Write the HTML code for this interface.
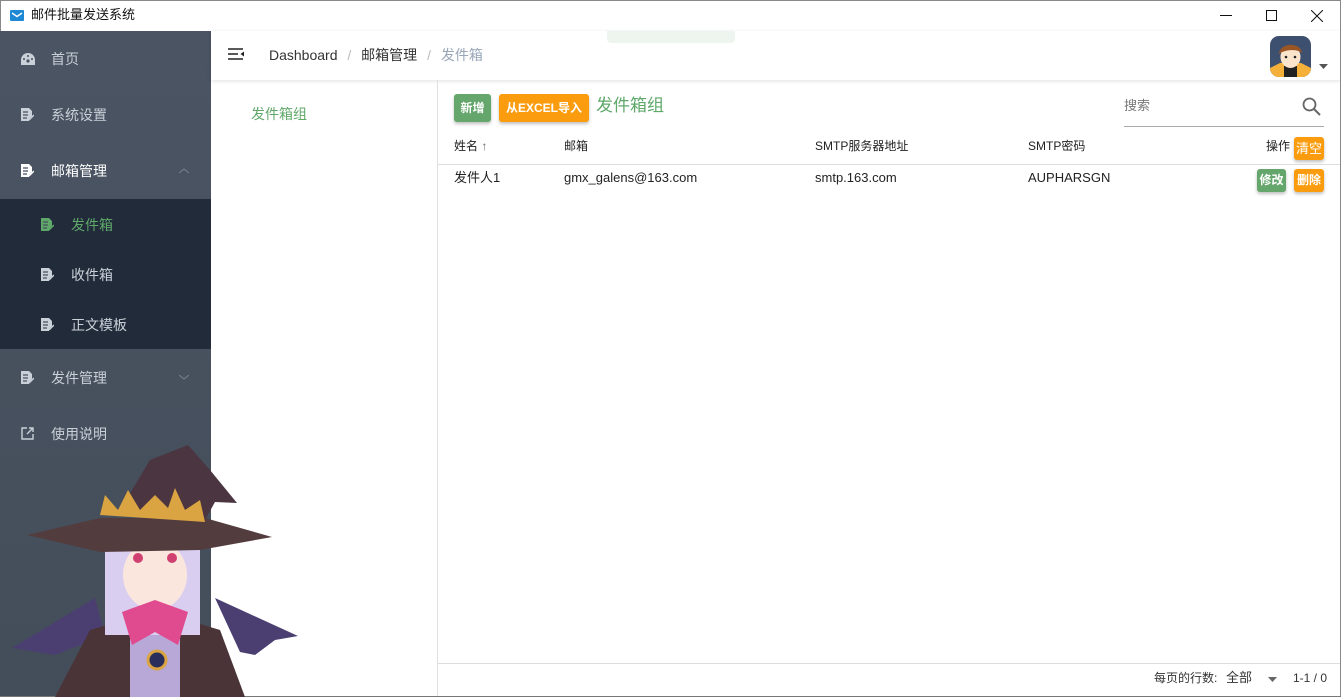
<!DOCTYPE html>
<html><head><meta charset="utf-8"><style>
*{margin:0;padding:0;box-sizing:border-box}
body{width:1341px;height:697px;overflow:hidden;font-family:"Liberation Sans","Noto Sans CJK SC",sans-serif;background:#fff;position:relative;font-size:13px;color:#222;line-height:1.15}
.abs{position:absolute}
#title{left:0;top:0;width:1341px;height:31px;background:#fff;border:1px solid #888;border-bottom:none}
#side{left:0;top:31px;width:211px;height:666px;background:linear-gradient(#4a5463,#444e5a)}
.mi{position:absolute;left:0;width:211px;height:56px;color:#c9d0d8;font-size:14px}
.mi span{position:absolute;left:51px;top:20px}
.ic{position:absolute;left:21px;top:21px;width:13px;height:13px}
#sub{left:0;top:199px;width:211px;height:150px;background:#212b3a}
.si{position:absolute;left:0;width:211px;height:50px;color:#c9d0d8;font-size:14px}
.si span{position:absolute;left:71px;top:18px}
.si .ic{left:41px;top:19px}
.btn{position:absolute;color:#fff;font-size:12px;border-radius:3px;box-shadow:0 2px 3px rgba(0,0,0,.25);text-align:center}
</style></head><body>
<div id="title" class="abs">
 <svg class="abs" style="left:9px;top:9px" width="14" height="11"><rect width="14" height="11" rx="1" fill="#1e88d4"/><path d="M2 3 L7 6.5 L12 3" stroke="#fff" stroke-width="1.4" fill="none"/></svg>
 <div class="abs" style="left:30px;top:7px;font-size:13px;color:#111">邮件批量发送系统</div>
 <div class="abs" style="left:1219px;top:14px;width:12px;height:1px;background:#111"></div>
 <div class="abs" style="left:1265px;top:9px;width:11px;height:11px;border:1px solid #111"></div>
 <svg class="abs" style="left:1310px;top:9px" width="12" height="12"><path d="M0 0L12 12M12 0L0 12" stroke="#111" stroke-width="1"/></svg>
</div>
<div id="side" class="abs"></div>
<svg class="abs" style="left:0;top:0" width="0" height="0"><defs>
<g id="doc"><path d="M0 0h8l3 3v5l-3 3v2H0z" fill="currentColor"/><path d="M2 4h5M2 7h5M2 10h4" stroke="#48525f" stroke-width="1.2"/><path d="M8 12l5-5" stroke="currentColor" stroke-width="1.5"/></g>
</defs></svg>
<div class="mi" style="top:31px"><svg class="ic" style="top:22px;width:14px;height:12px" viewBox="0 0 14 12"><path d="M7 0A7 7 0 0 0 0 7v5h14V7A7 7 0 0 0 7 0z" fill="#c9d0d8"/><circle cx="7" cy="8" r="1.6" fill="#48525f"/><circle cx="3" cy="6" r="1" fill="#48525f"/><circle cx="11" cy="6" r="1" fill="#48525f"/><circle cx="7" cy="3" r="1" fill="#48525f"/></svg><span>首页</span></div>
<div class="mi" style="top:87px;color:#c9d0d8"><svg class="ic" viewBox="0 0 13 13"><use href="#doc"/></svg><span>系统设置</span></div>
<div class="mi" style="top:143px;color:#fff"><svg class="ic" viewBox="0 0 13 13"><use href="#doc"/></svg><span>邮箱管理</span><svg class="abs" style="left:179px;top:25px" width="10" height="6"><path d="M0 5L5 1L10 5" stroke="#7a838f" fill="none"/></svg></div>
<div id="sub" class="abs">
 <div class="si" style="top:0;color:#5fa86a"><svg class="ic" viewBox="0 0 13 13"><use href="#doc"/></svg><span>发件箱</span></div>
 <div class="si" style="top:50px"><svg class="ic" viewBox="0 0 13 13"><use href="#doc"/></svg><span>收件箱</span></div>
 <div class="si" style="top:100px"><svg class="ic" viewBox="0 0 13 13"><use href="#doc"/></svg><span>正文模板</span></div>
</div>
<div class="mi" style="top:350px"><svg class="ic" viewBox="0 0 13 13"><use href="#doc"/></svg><span>发件管理</span><svg class="abs" style="left:179px;top:24px" width="10" height="6"><path d="M0 1L5 5L10 1" stroke="#7a838f" fill="none"/></svg></div>
<div class="mi" style="top:406px"><svg class="ic" viewBox="0 0 13 13"><path d="M6 1H1v11h11V7" stroke="#c9d0d8" stroke-width="1.4" fill="none"/><path d="M6 7L12 1M8 1h4v4" stroke="#c9d0d8" stroke-width="1.4" fill="none"/></svg><span>使用说明</span></div>

<div class="abs" style="left:211px;top:31px;width:1130px;height:49px;background:#fff;box-shadow:0 1px 4px rgba(0,0,0,.12)"></div>
<svg class="abs" style="left:228px;top:48px" width="16" height="13"><path d="M0 1h15M0 6h10M0 11h15" stroke="#222" stroke-width="1.6"/><path d="M16 3.5L12.5 6L16 8.5z" fill="#222"/></svg>
<div class="abs" style="left:269px;top:47px;font-size:14px;color:#333">Dashboard <span style="color:#bbb;margin:0 6px">/</span> 邮箱管理 <span style="color:#bbb;margin:0 6px">/</span> <span style="color:#98a6b8">发件箱</span></div>
<div class="abs" style="left:607px;top:31px;width:128px;height:12px;background:#edf5ee;border-radius:0 0 4px 4px"></div>
<svg class="abs" style="left:1270px;top:36px" width="41" height="41"><defs><clipPath id="av"><rect width="41" height="41" rx="9"/></clipPath></defs><g clip-path="url(#av)"><rect width="41" height="41" fill="#3e5070"/><path d="M0 41V32l10-5h21l10 5v9z" fill="#f5b03a"/><path d="M14 30h13v11H14z" fill="#222"/><ellipse cx="20.5" cy="21" rx="10" ry="11" fill="#fbe4cc"/><path d="M9 18c1-12 22-12 23-1c-4-4-17-4-23 1z" fill="#9a5525"/><circle cx="16" cy="21" r="1.3" fill="#222"/><circle cx="25" cy="21" r="1.3" fill="#222"/></g></svg>
<svg class="abs" style="left:1319px;top:64px" width="9" height="5"><path d="M0 0h9L4.5 5z" fill="#555"/></svg>

<div class="abs" style="left:437px;top:80px;width:1px;height:617px;background:#e0e0e0"></div>
<div class="abs" style="left:251px;top:106px;font-size:14px;color:#5fa86a">发件箱组</div>

<div class="btn" style="left:454px;top:94px;width:37px;height:28px;line-height:28px;background:#64a66b;font-weight:bold">新增</div>
<div class="btn" style="left:499px;top:94px;width:90px;height:28px;line-height:28px;background:#fb9c0e;font-weight:bold">从EXCEL导入</div>
<div class="abs" style="left:596px;top:96px;font-size:17px;color:#5fa86a">发件箱组</div>
<div class="abs" style="left:1124px;top:99px;font-size:13px;color:#777">搜索</div>
<svg class="abs" style="left:1302px;top:97px" width="19" height="19"><circle cx="7.5" cy="7.5" r="6" stroke="#666" stroke-width="1.8" fill="none"/><path d="M12 12l6 6" stroke="#666" stroke-width="2"/></svg>
<div class="abs" style="left:1124px;top:126px;width:200px;height:1px;background:#aaa"></div>

<div class="abs" style="left:454px;top:140px;font-size:12px;color:#222">姓名 <span style="color:#666">↑</span></div>
<div class="abs" style="left:564px;top:140px;font-size:12px">邮箱</div>
<div class="abs" style="left:815px;top:140px;font-size:12px">SMTP服务器地址</div>
<div class="abs" style="left:1028px;top:140px;font-size:12px">SMTP密码</div>
<div class="abs" style="left:1266px;top:140px;font-size:12px">操作</div>
<div class="btn" style="left:1294px;top:137px;width:30px;height:23px;line-height:23px;background:#fb9c0e;font-size:13px">清空</div>
<div class="abs" style="left:438px;top:164px;width:903px;height:1px;background:#ddd"></div>
<div class="abs" style="left:454px;top:171px;font-size:13px">发件人1</div>
<div class="abs" style="left:564px;top:171px;font-size:13px">gmx_galens@163.com</div>
<div class="abs" style="left:815px;top:171px;font-size:13px">smtp.163.com</div>
<div class="abs" style="left:1028px;top:171px;font-size:13px">AUPHARSGN</div>
<div class="btn" style="left:1257px;top:169px;width:29px;height:23px;line-height:23px;background:#64a66b;font-weight:bold">修改</div>
<div class="btn" style="left:1294px;top:169px;width:30px;height:23px;line-height:23px;background:#fb9c0e;font-weight:bold">删除</div>

<div class="abs" style="left:438px;top:663px;width:903px;height:1px;background:#ddd"></div>
<div class="abs" style="left:1154px;top:672px;font-size:12px;color:#333">每页的行数:</div>
<div class="abs" style="left:1226px;top:671px;font-size:13px;color:#333">全部</div>
<svg class="abs" style="left:1268px;top:677px" width="9" height="5"><path d="M0 0h9L4.5 5z" fill="#666"/></svg>
<div class="abs" style="left:1293px;top:672px;font-size:12px;color:#333">1-1 / 0</div>
<div class="abs" style="left:1340px;top:31px;width:1px;height:666px;background:#888"></div>
<div class="abs" style="left:0;top:696px;width:1341px;height:1px;background:#777"></div>

<svg class="abs" style="left:0;top:440px" width="310" height="257">
<path d="M12 208L95 158L110 215L80 205L55 215z" fill="#4b3f72"/>
<path d="M215 158L298 196L275 200L255 215L240 212z" fill="#4b3f72"/>
<path d="M55 257L90 190L130 178L180 178L220 190L245 257z" fill="#4a3438"/>
<path d="M130 180h50v77h-50z" fill="#b8a8d8"/>
<path d="M105 100h95v95h-95z" fill="#d9cdf0"/>
<ellipse cx="155" cy="135" rx="32" ry="35" fill="#fbe6de"/>
<path d="M122 172L155 160L188 172L178 205L155 192L132 205z" fill="#e04a8e"/>
<circle cx="157" cy="220" r="9" fill="#2a2e5a" stroke="#d9a441" stroke-width="3"/>
<path d="M120 70L150 20L188 5L210 30L237 63L215 62L205 80z" fill="#4a3540"/>
<path d="M27 95L100 78L205 78L272 97L200 110L100 112z" fill="#533c3e"/>
<path d="M100 75L105 55L118 70L128 50L140 70L155 55L168 68L175 48L185 70L200 60L205 82z" fill="#d9a441"/>
<circle cx="138" cy="118" r="5" fill="#d04070"/><circle cx="172" cy="118" r="5" fill="#d04070"/>
</svg>
</body></html>
